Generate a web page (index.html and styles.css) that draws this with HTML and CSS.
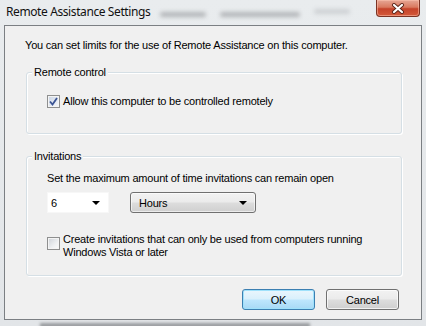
FILE: index.html
```html
<!DOCTYPE html>
<html lang="en">
<head>
  <meta charset="UTF-8">
  <meta name="viewport" content="width=device-width, initial-scale=1.0">
  <title>Remote Assistance Settings</title>
  <link rel="stylesheet" href="styles.css">
</head>
<body>

<div class="window">
  <!-- Title bar (Aero glass, tabs of the parent dialog blurred behind it) -->
  <div class="titlebar">
    <span class="title">Remote Assistance Settings</span>
    <div class="behind-tabs" aria-hidden="true">
      <span class="tab-blur"></span>
      <span class="tab-blur tab-wide"></span>
      <span class="tab-blur tab-active"></span>
    </div>
    <button class="close-btn" aria-label="Close">
      <svg width="14" height="11" viewBox="0 0 14 11">
        <path d="M3 2 L11 9 M11 2 L3 9" stroke="#5a2418" stroke-width="4" stroke-linecap="round"/>
        <path d="M3 2 L11 9 M11 2 L3 9" stroke="#fff" stroke-width="2.2" stroke-linecap="round"/>
      </svg>
    </button>
  </div>

  <div class="frame">
    <p class="intro">You can set limits for the use of Remote Assistance on this computer.</p>

    <!-- Remote control group -->
    <div class="group group-remote">
      <div class="group-title">Remote control</div>
      <label class="check-row">
        <span class="checkbox checked">
          <svg width="9" height="9" viewBox="0 0 9 9">
            <path d="M1 4.5 L3.5 7.5 L8 1" fill="none" stroke="#3b5494" stroke-width="1.8"/>
          </svg>
        </span>
        <span>Allow this computer to be controlled remotely</span>
      </label>
    </div>

    <!-- Invitations group -->
    <div class="group group-invites">
      <div class="group-title">Invitations</div>
      <p class="invite-text">Set the maximum amount of time invitations can remain open</p>
      <div class="combo-row">
        <div class="combo combo-number">
          <span>6</span>
          <span class="arrow"></span>
        </div>
        <div class="combo combo-unit">
          <span>Hours</span>
          <span class="arrow"></span>
        </div>
      </div>
      <label class="check-row check-multi">
        <span class="checkbox"></span>
        <span>Create invitations that can only be used from computers running<br>Windows Vista or later</span>
      </label>
    </div>

    <div class="buttons">
      <button class="btn btn-default">OK</button>
      <button class="btn">Cancel</button>
    </div>
  </div>

  <div class="glass-bottom" aria-hidden="true">
    <span class="bottom-blur"></span>
  </div>
</div>

</body>
</html>
```

FILE: styles.css
```css
/* Vista style dialog */
body {
  margin: 0;
  padding: 0;
  background-color: #e4e7ea;
  font-family: "Liberation Sans", Arial, sans-serif;
  font-size: 11px;
  letter-spacing: -0.2px;
  color: #000;
}
.window {
  width: 426px;
  height: 326px;
  overflow: hidden;
  background: linear-gradient(to bottom, #e9ecee, #e2e5e8);
}
.titlebar {
  height: 25px;
  display: flex;
  align-items: flex-start;
}
.title {
  font-family: "Noto Sans", sans-serif;
  font-size: 12px;
  letter-spacing: -0.4px;
  line-height: 16px;
  margin: 4px 0 0 6px;
  color: #111;
}
.behind-tabs {
  display: flex;
  align-items: flex-start;
  gap: 14px;
  margin: 12px 0 0 10px;
}
.tab-blur {
  width: 46px;
  height: 5px;
  background-color: #b2b5b8;
  border-radius: 3px;
  filter: blur(2px);
}
.tab-wide {
  width: 80px;
}
.tab-active {
  width: 36px;
  margin-top: -3px;
  background-color: #cdd0d3;
}
.close-btn {
  margin: 0 6px 0 auto;
  width: 44px;
  height: 17px;
  padding: 0;
  border: 1px solid #7b3324;
  border-top: none;
  border-radius: 0 0 4px 4px;
  background: linear-gradient(to bottom, #e6a795 0%, #d9795f 45%, #c5432a 55%, #d45a3b 100%);
  box-shadow: inset 0 0 0 1px rgba(255, 200, 180, 0.5);
  display: flex;
  align-items: center;
  justify-content: center;
}
.frame {
  margin: 0 4px;
  height: 295px;
  box-sizing: border-box;
  border: 1px solid #7b7f83;
  background-color: #f0f0f0;
  padding: 12px 0 0 20px;
}
.intro {
  margin: 0;
  line-height: 14px;
}
.group {
  margin: 20px 19px 0 1px;
  border: 1px solid #d5dfe5;
  border-radius: 3px;
  box-shadow: inset 1px 1px 0 #fff, 1px 1px 0 #fff;
  padding: 0 0 0 20px;
}
.group-title {
  width: fit-content;
  margin: -8px 0 0 -15px;
  padding: 0 2px;
  line-height: 14px;
  background-color: #f0f0f0;
}
.group-remote {
  padding-bottom: 25px;
}
.group-remote .check-row {
  margin-top: 15px;
}
.group-invites {
  margin-top: 22px;
  padding-bottom: 16px;
}
.check-row {
  display: flex;
  align-items: center;
  gap: 3px;
  line-height: 14px;
}
.check-multi {
  align-items: flex-start;
  margin-top: 20px;
  line-height: 13px;
}
.check-multi .checkbox {
  margin-top: 4px;
}
.checkbox {
  width: 13px;
  height: 13px;
  flex-shrink: 0;
  box-sizing: border-box;
  border: 1px solid #8e8f8f;
  background: linear-gradient(135deg, #cdd1d7 0%, #eef0f2 60%, #fbfbfb 100%);
  box-shadow: inset 0 0 0 1px #f4f4f4;
  display: flex;
  align-items: center;
  justify-content: center;
}
.checkbox.checked {
  background: linear-gradient(135deg, #c9d4e4 0%, #e6ebf3 60%, #f6f8fb 100%);
}
.invite-text {
  margin: 8px 0 0 0;
  line-height: 14px;
}
.combo-row {
  display: flex;
  gap: 21px;
  margin-top: 7px;
}
.combo {
  height: 21px;
  box-sizing: border-box;
  display: flex;
  align-items: center;
  justify-content: space-between;
  padding: 0 8px 0 3px;
}
.combo-number {
  width: 62px;
  background-color: #fff;
  border: 1px solid #f7f7f7;
}
.combo-unit {
  width: 126px;
  border: 1px solid #707070;
  border-radius: 3px;
  background: linear-gradient(to bottom, #f2f2f2 0%, #ebebeb 48%, #dddddd 52%, #cfcfcf 100%);
  box-shadow: inset 0 0 0 1px rgba(255, 255, 255, 0.6);
  padding-left: 8px;
}
.arrow {
  width: 0;
  height: 0;
  border-left: 4px solid transparent;
  border-right: 4px solid transparent;
  border-top: 4px solid #000;
  margin-top: 1px;
}
.buttons {
  display: flex;
  justify-content: flex-end;
  gap: 11px;
  margin: 13px 22px 0 0;
}
.btn {
  width: 73px;
  height: 21px;
  padding: 0;
  font-family: "Liberation Sans", Arial, sans-serif;
  font-size: 11px;
  letter-spacing: -0.2px;
  color: #000;
  border: 1px solid #707070;
  border-radius: 3px;
  background: linear-gradient(to bottom, #f2f2f2 0%, #ebebeb 48%, #dddddd 52%, #cfcfcf 100%);
  box-shadow: inset 0 0 0 1px rgba(255, 255, 255, 0.7);
}
.btn-default {
  border-color: #3c7fb1;
  background: linear-gradient(to bottom, #eaf6fd 0%, #d9f0fc 48%, #bee6fd 52%, #a7d9f5 100%);
  box-shadow: inset 0 0 0 1px #9fe1fb;
}
.glass-bottom {
  height: 6px;
  overflow: hidden;
  padding: 3px 0 0 40px;
  box-sizing: border-box;
}
.bottom-blur {
  display: block;
  width: 270px;
  height: 5px;
  background-color: #9a9da0;
  filter: blur(1.5px);
}
```
